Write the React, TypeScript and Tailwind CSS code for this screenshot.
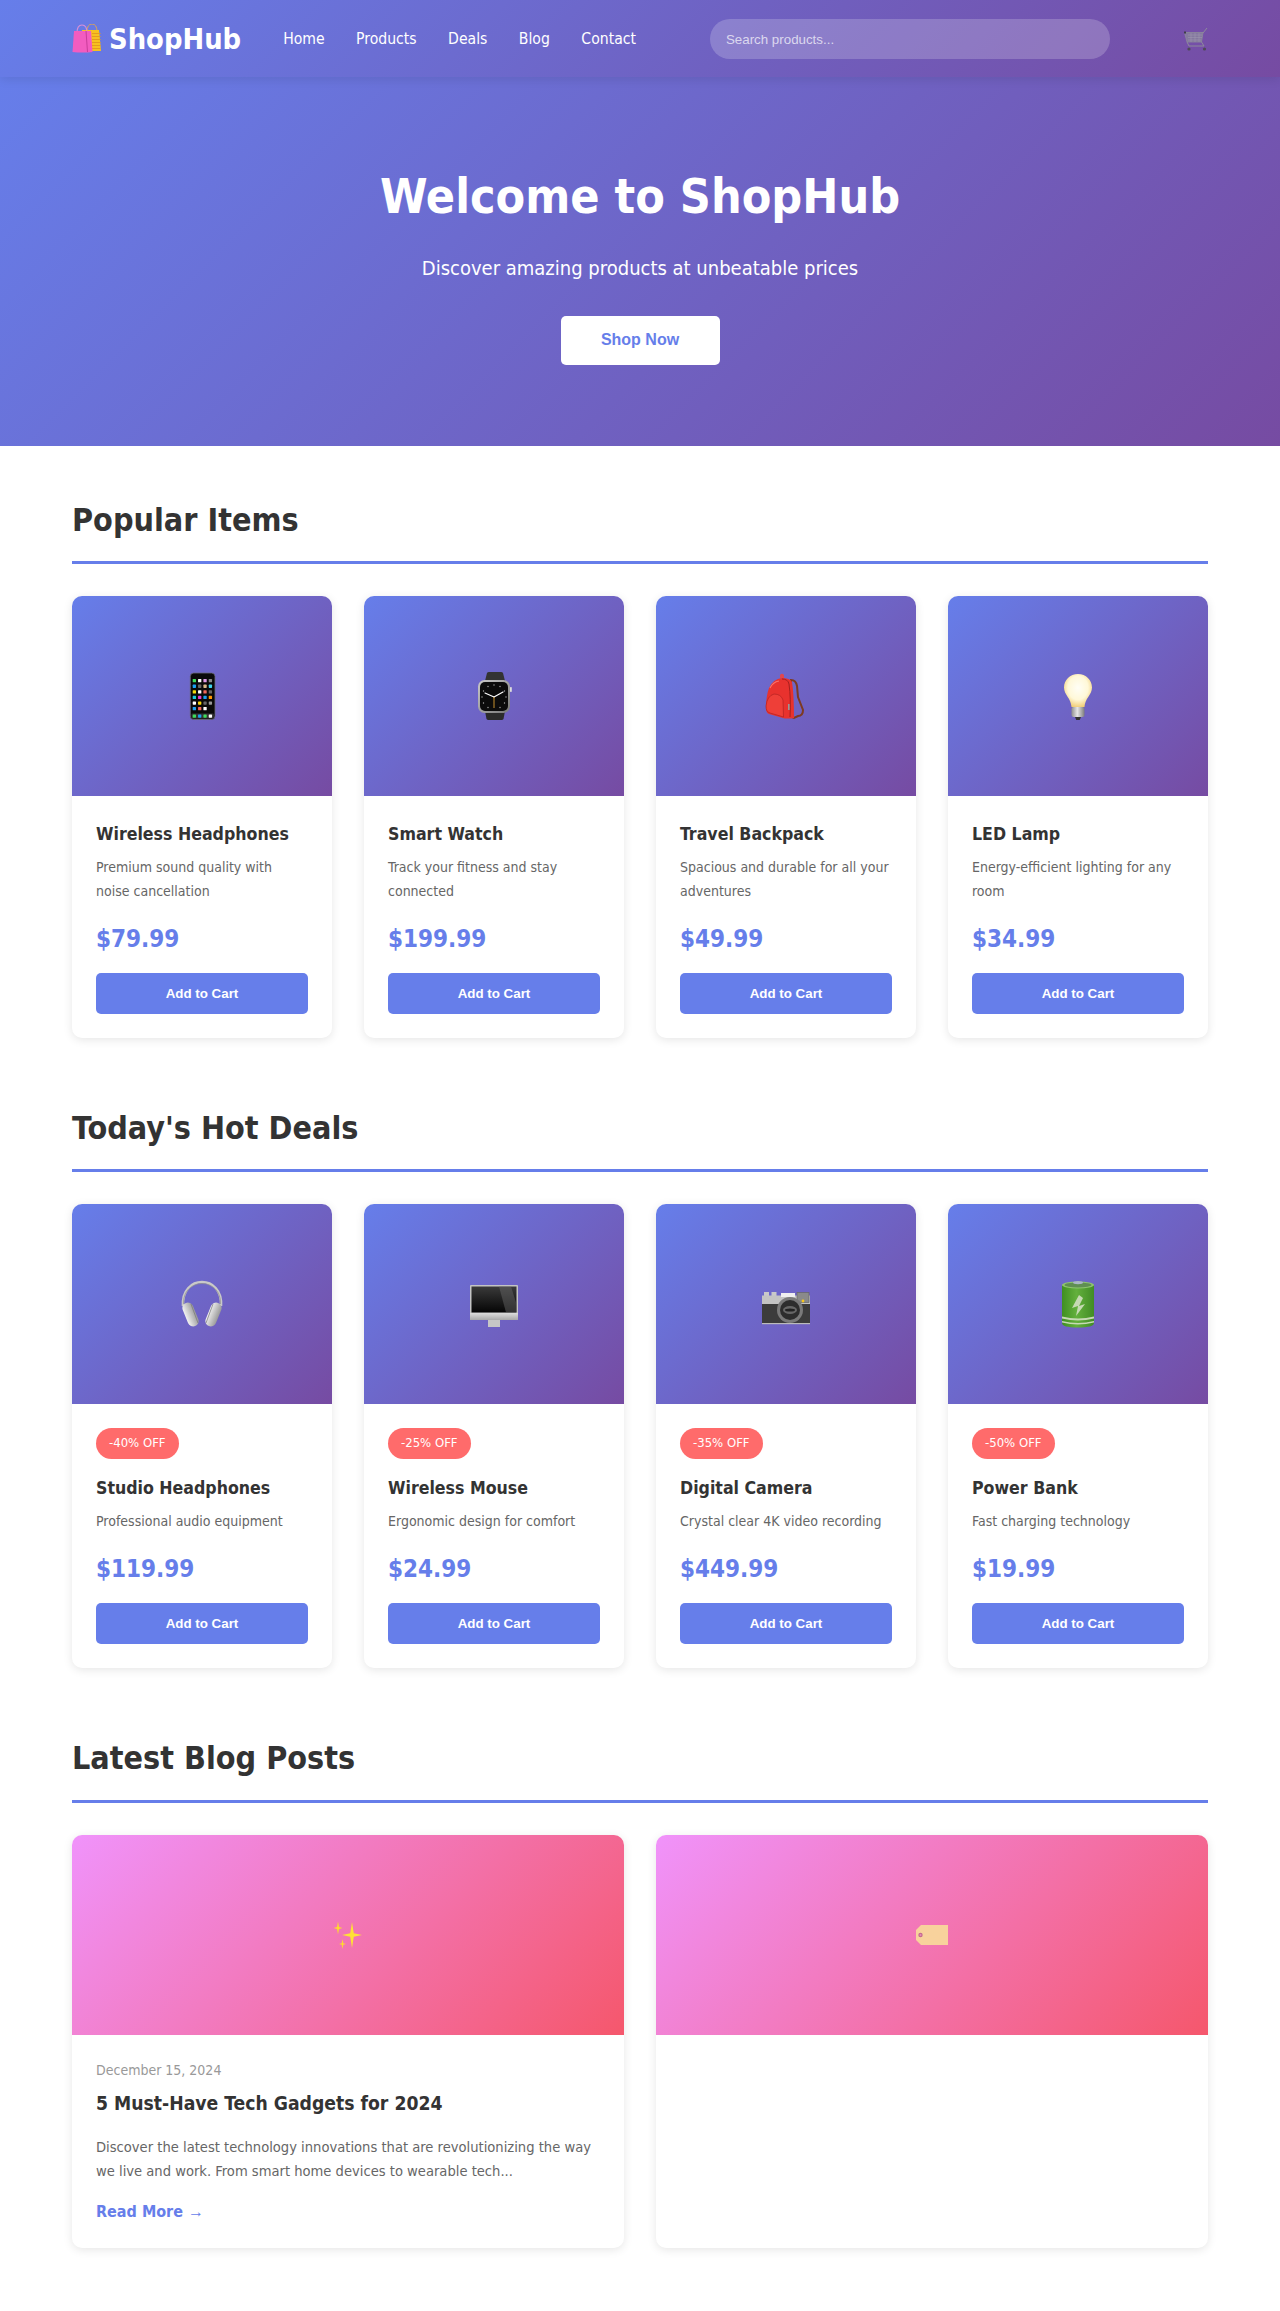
import type { ReactNode } from 'react';

// emoji drawings, all on a 48x48 box unless noted
const phoneDots = [
  ['#3ddc5a', '#fff', '#e09be8', '#8a8a8a'],
  ['#1ba0f2', '#666', '#d9b98a', '#3fd4ee'],
  ['#f5d90a', '#fff', '#f0685c', '#666'],
  ['#19c8dc', '#e83bd0', '#1ba0f2', '#ff9500'],
  ['#fff', '#f5d90a', '#666', '#999'],
  ['#1ba0f2', '#f0685c', '#fff', ''],
];

const Phone = () => (
  <svg width="48" height="48" viewBox="0 0 48 48">
    <rect x="12.3" y="1" width="24.7" height="46.5" rx="3.5" fill="#0a0a0a" stroke="#6b6b78" strokeWidth="0.8" />
    {phoneDots.map((row, r) =>
      row.map((c, i) => c && <rect key={`${r}-${i}`} x={14.7 + i * 5.35} y={7 + r * 5.6} width="3.3" height="3.3" rx="0.6" fill={c} />),
    )}
    <rect x="13.5" y="41.5" width="22.3" height="5" rx="1" fill="#333" />
    {['#3ddc5a', '#1ba0f2', '#3ddc5a', '#fff'].map((c, i) => (
      <rect key={i} x={14.7 + i * 5.35} y="42.4" width="3.3" height="3.3" rx="0.6" fill={c} />
    ))}
  </svg>
);

const Watch = () => (
  <svg width="48" height="48" viewBox="0 0 48 48">
    <defs>
      <linearGradient id="watchCase" x1="0" y1="0" x2="1" y2="1">
        <stop offset="0" stopColor="#c9c9c9" />
        <stop offset="1" stopColor="#777" />
      </linearGradient>
    </defs>
    <path d="M15 9 L17 1 Q17.5 0 19 0 H31 Q32.5 0 33 1 L35 9Z" fill="#333" />
    <path d="M15 39 L16.5 47 Q17 48 18.5 48 H31.5 Q33 48 33.5 47 L35 39Z" fill="#2b2b2b" />
    <rect x="8" y="8" width="32" height="33" rx="6.5" fill="url(#watchCase)" />
    <rect x="40" y="15" width="1.8" height="5" rx="0.8" fill="#ddd" />
    <rect x="10" y="10" width="28" height="29" rx="5" fill="#0b0b0b" />
    {[[24, 13], [30, 14.5], [34.5, 19], [36, 25], [34.5, 31], [30, 35.5], [18, 35.5], [13.5, 31], [12, 25], [13.5, 19], [18, 14.5]].map(([x, y]) => (
      <circle key={`${x}-${y}`} cx={x} cy={y} r="0.7" fill="#aaa" />
    ))}
    <path d="M24 25 L15 21" stroke="#fff" strokeWidth="1.2" strokeLinecap="round" />
    <path d="M24 25 L33 20" stroke="#fff" strokeWidth="1.2" strokeLinecap="round" />
    <path d="M24 25 V36" stroke="#c8922e" strokeWidth="1" />
  </svg>
);

const Backpack = () => (
  <svg width="48" height="48" viewBox="0 0 48 48">
    <path d="M29 8 Q34 8 35 14 L36 25 L41 38 Q41 44 36 44 L32 46 L27 44Z" fill="none" stroke="#7d3a22" strokeWidth="2" />
    <path d="M18 3 Q20 0.5 22 3 L22 6 H18Z" fill="#e0474f" />
    <path d="M4 36 Q4 24 7 16 Q11 7 20 6 Q28 6 30 10 Q32 22 32 46 Q24 47 21 46 L7 42 Q4 41 4 36Z" fill="#e8322e" />
    <path d="M20 7 Q26 7 27 12 Q29 26 28 45" fill="none" stroke="#a51f1e" strokeWidth="1" />
    <path d="M4 34 Q5 24 12 22 Q19 22 21 28 L21.5 45 L8 41 Q4 40 4 34Z" fill="#ee3f38" stroke="#b92523" strokeWidth="0.8" />
    <path d="M8 16 Q11 10 17 9" fill="none" stroke="#f8716a" strokeWidth="1.2" />
    <rect x="26" y="32" width="1.6" height="6" fill="#999" />
  </svg>
);

const Bulb = () => (
  <svg width="48" height="48" viewBox="0 0 48 48">
    <defs>
      <radialGradient id="bulbGlass" cx="0.5" cy="0.42" r="0.6">
        <stop offset="0" stopColor="#fffef6" />
        <stop offset="0.6" stopColor="#fff8d8" />
        <stop offset="1" stopColor="#f0cc74" />
      </radialGradient>
      <linearGradient id="bulbBase" x1="0" y1="0" x2="1" y2="0">
        <stop offset="0" stopColor="#8f8f8f" />
        <stop offset="0.45" stopColor="#e6e6e6" />
        <stop offset="1" stopColor="#7c7c7c" />
      </linearGradient>
    </defs>
    <path d="M24 2 C32 2 38 8 38 15.5 C38 23 31 26 30.5 35 H17.5 C17 26 10 23 10 15.5 C10 8 16 2 24 2Z" fill="url(#bulbGlass)" />
    <rect x="17.5" y="35" width="13" height="10" rx="2" fill="url(#bulbBase)" />
    <path d="M21 45 H27 L25.5 48.5 H22.5Z" fill="#333" />
  </svg>
);

const Headphones = () => (
  <svg width="48" height="48" viewBox="0 0 48 48">
    <defs>
      <linearGradient id="cupGrad" x1="0" y1="0" x2="1" y2="0">
        <stop offset="0" stopColor="#f2f2f2" />
        <stop offset="1" stopColor="#9a9a9a" />
      </linearGradient>
    </defs>
    <path d="M5 26 C4 10 14 2 24 2 C34 2 44 10 43 26" fill="none" stroke="#c9c9c9" strokeWidth="2.6" />
    <path d="M5.5 24 C5 11 14 3.5 24 3.5 C34 3.5 43 11 42.5 24" fill="none" stroke="#8e8e8e" strokeWidth="0.7" />
    <rect x="7" y="22" width="11" height="25" rx="5.5" transform="rotate(-22 12.5 34.5)" fill="url(#cupGrad)" />
    <rect x="30" y="22" width="11" height="25" rx="5.5" transform="rotate(22 35.5 34.5)" fill="url(#cupGrad)" />
    <path d="M13 24 L20 43" stroke="#777" strokeWidth="0.7" />
    <path d="M35 24 L28 43" stroke="#777" strokeWidth="0.7" />
  </svg>
);

const Monitor = () => (
  <svg width="48" height="48" viewBox="0 0 48 48">
    <defs>
      <linearGradient id="screenGrad" x1="0" y1="0" x2="0" y2="1">
        <stop offset="0" stopColor="#3a3a3a" />
        <stop offset="1" stopColor="#050505" />
      </linearGradient>
      <linearGradient id="chinGrad" x1="0" y1="0" x2="0" y2="1">
        <stop offset="0" stopColor="#dcdcdc" />
        <stop offset="1" stopColor="#a8a8a8" />
      </linearGradient>
    </defs>
    <rect x="0" y="5" width="48" height="35" rx="1" fill="#c4c4c4" />
    <rect x="1.5" y="6.5" width="45" height="26" fill="url(#screenGrad)" />
    <path d="M29 6.5 H41 L46.5 24 V32.5 H36Z" fill="#6a6a6a" opacity="0.45" />
    <rect x="0" y="33" width="48" height="7" fill="url(#chinGrad)" />
    <rect x="18" y="40" width="12" height="7" fill="#c6c6c6" />
  </svg>
);

const Camera = () => (
  <svg width="48" height="48" viewBox="0 0 48 48">
    <rect x="2" y="12" width="5" height="4" fill="#c9c9c9" />
    <rect x="9.5" y="12" width="5" height="4" fill="#c9c9c9" />
    <rect x="0" y="15.5" width="48" height="9" fill="#c4c4c4" />
    <rect x="19" y="13" width="14" height="4" fill="#efefef" />
    <rect x="35" y="12.5" width="12" height="10" fill="#8a8a8a" stroke="#666" strokeWidth="0.7" />
    <rect x="0" y="24" width="48" height="19" fill="#3c3c3c" />
    <rect x="0" y="43" width="48" height="1.2" fill="#bbb" />
    <circle cx="28" cy="30" r="13" fill="#7a7a7a" />
    <circle cx="28" cy="30" r="10" fill="#2d2d2d" />
    <ellipse cx="28" cy="30" rx="7" ry="4" fill="#666" />
    <ellipse cx="28" cy="30" rx="5" ry="1.5" fill="#222" />
    <circle cx="41" cy="21" r="1.4" fill="#f7c61b" />
  </svg>
);

const Battery = () => (
  <svg width="48" height="48" viewBox="0 0 48 48">
    <defs>
      <linearGradient id="batteryGrad" x1="0" y1="0" x2="1" y2="0">
        <stop offset="0" stopColor="#3f8f22" />
        <stop offset="0.45" stopColor="#63b03c" />
        <stop offset="1" stopColor="#418c25" />
      </linearGradient>
    </defs>
    <path d="M8 5 V43 Q8 47.5 24 47.5 Q40 47.5 40 43 V5Z" fill="url(#batteryGrad)" />
    <ellipse cx="24" cy="5" rx="16" ry="3.5" fill="#8ec56e" />
    <ellipse cx="24" cy="5" rx="13.5" ry="2.4" fill="#5f8f52" />
    <ellipse cx="24" cy="2.6" rx="5" ry="1.6" fill="#a9b7c4" />
    <path d="M25 15 L18 28 L24 26 L22 36 L31 24 L25 26 L29 18Z" fill="#c6d9b4" />
    <path d="M8 36.5 Q24 40.5 40 36.5 V38.5 Q24 42.5 8 38.5Z" fill="#c6d9b4" />
    <path d="M8 41 Q24 45 40 41 V42.5 Q24 46.5 8 42.5Z" fill="#c6d9b4" />
  </svg>
);

const Sparkles = () => (
  <svg width="32" height="32" viewBox="0 0 32 32">
    <path d="M20 3 L21.8 14.2 L30 16 L21.8 17.8 L20 29 L18.2 17.8 L10 16 L18.2 14.2Z" fill="#ffe135" />
    <path d="M6 2.5 L7 8 L10.5 9 L7 10 L6 15.5 L5 10 L1.5 9 L5 8Z" fill="#ffd92e" />
    <path d="M10.5 20 L11.3 24.2 L14 25 L11.3 25.8 L10.5 30 L9.7 25.8 L7 25 L9.7 24.2Z" fill="#ffd92e" />
  </svg>
);

const Tag = () => (
  <svg width="32" height="32" viewBox="0 0 32 32">
    <path d="M5 6 H32 V26 H5 L0 21 V11Z" fill="#f8d29c" />
    <circle cx="4.5" cy="16" r="2.2" fill="#c46b8f" />
    <circle cx="4.5" cy="16" r="1" fill="#e88ab8" />
  </svg>
);

const Bags = () => (
  <svg width="29" height="29" viewBox="0 0 29 29" className="shrink-0">
    <path d="M15 8 Q15 0 20 0 Q25 0 25 8" fill="none" stroke="#d9a25c" strokeWidth="1" />
    <path d="M10 6 H27 L29 27 H10Z" fill="#f7c11f" />
    {[9, 12, 15, 18, 21, 24].map((y) => (
      <rect key={y} x="20" y={y} width="8.5" height="1" fill="#e59a1f" />
    ))}
    <path d="M5 9 Q5 1 10 1 Q15 1 15 9" fill="none" stroke="#d78fd8" strokeWidth="1.2" />
    <path d="M2 7 H19 L20.5 28 Q11 29 0.5 28Z" fill="#f25cc0" />
    <path d="M14 7 L15.5 28" stroke="#c93c9a" strokeWidth="1" />
  </svg>
);

const Cart = () => (
  <svg width="24" height="24" viewBox="0 0 24 24" className="shrink-0">
    <path d="M0.5 5.5 H19 L17.5 15 H3Z" fill="#84789f" stroke="#8d8a9b" strokeWidth="0.8" />
    <path d="M4 8 H18 M4 10.5 H18 M4 13 H17 M7 6 V15 M11 6 V15 M15 6 V15" stroke="#a09bb0" strokeWidth="0.5" />
    <path d="M19 6 L23 1" stroke="#8d8a9b" strokeWidth="1" />
    <path d="M3 15 L5 19 H20 L17.5 15" fill="none" stroke="#8d8a9b" strokeWidth="1" />
    <circle cx="5" cy="22" r="1.6" fill="#4e4a55" />
    <circle cx="20.5" cy="22" r="1.6" fill="#4e4a55" />
    <rect x="0" y="4.5" width="2" height="2" fill="#3f3c4a" />
  </svg>
);

type Product = { icon: ReactNode; name: string; desc: string; price: string; off?: string };

const popular: Product[] = [
  { icon: <Phone />, name: 'Wireless Headphones', desc: 'Premium sound quality with noise cancellation', price: '$79.99' },
  { icon: <Watch />, name: 'Smart Watch', desc: 'Track your fitness and stay connected', price: '$199.99' },
  { icon: <Backpack />, name: 'Travel Backpack', desc: 'Spacious and durable for all your adventures', price: '$49.99' },
  { icon: <Bulb />, name: 'LED Lamp', desc: 'Energy-efficient lighting for any room', price: '$34.99' },
];

const deals: Product[] = [
  { icon: <Headphones />, off: '-40% OFF', name: 'Studio Headphones', desc: 'Professional audio equipment', price: '$119.99' },
  { icon: <Monitor />, off: '-25% OFF', name: 'Wireless Mouse', desc: 'Ergonomic design for comfort', price: '$24.99' },
  { icon: <Camera />, off: '-35% OFF', name: 'Digital Camera', desc: 'Crystal clear 4K video recording', price: '$449.99' },
  { icon: <Battery />, off: '-50% OFF', name: 'Power Bank', desc: 'Fast charging technology', price: '$19.99' },
];

const navLinks = ['Home', 'Products', 'Deals', 'Blog', 'Contact'];

const gradient = 'bg-[linear-gradient(135deg,#667eea_0%,#764ba2_100%)]';
const pink = 'bg-[linear-gradient(135deg,#f093fb_0%,#f5576c_100%)]';
const cardBox = 'bg-white rounded-[10px] overflow-hidden shadow-[0_2px_10px_rgba(0,0,0,0.1)]';

const SectionTitle = ({ children }: { children: string }) => (
  <h2 className="text-[32px] leading-[1.6] font-bold text-[#333] border-b-[3px] border-[#667eea] pt-px pb-[15px] mb-8">{children}</h2>
);

const ProductCard = ({ item }: { item: Product }) => (
  <div className={cardBox}>
    <div className={`h-[200px] flex items-center justify-center ${gradient}`}>{item.icon}</div>
    <div className="p-6">
      {item.off && (
        <div className="w-fit bg-[#ff6b6b] text-white px-[13px] py-[5px] rounded-[20px] text-[13px] leading-[1.6] mb-[15px]">{item.off}</div>
      )}
      <h3 className="text-[17.6px] leading-[1.6] font-bold text-[#333] mb-2">{item.name}</h3>
      <p className="text-sm leading-[1.7] text-[#666] mb-4">{item.desc}</p>
      <div className="text-2xl leading-[1.6] font-bold text-[#667eea] mb-[15px]">{item.price}</div>
      <button className="block w-full h-[41px] bg-[#667eea] text-white rounded-[5px] text-[13.33px] font-bold font-['Liberation_Sans',sans-serif]">Add to Cart</button>
    </div>
  </div>
);

export default function App() {
  return (
    <div className="bg-white text-[#333] leading-[1.6] font-['DejaVu_Sans_Condensed','DejaVu_Sans',sans-serif]">
      <header className={`sticky top-0 z-10 h-[77px] flex items-center px-[72px] shadow-[0_2px_10px_rgba(0,0,0,0.1)] ${gradient}`}>
        <div className="flex items-center gap-2 text-[28.8px] font-bold text-white">
          <Bags />
          <span className="pt-[2px]">ShopHub</span>
        </div>
        <nav className="flex gap-[31.5px] ml-[42px] pt-px">
          {navLinks.map((l) => (
            <a key={l} className="text-white text-[15.6px]">{l}</a>
          ))}
        </nav>
        <input
          placeholder="Search products..."
          className="ml-[74px] w-[400px] h-10 mt-px rounded-[25px] bg-white/20 px-4 text-[13.33px] text-white placeholder:text-white/70 font-['Liberation_Sans',sans-serif] outline-none"
        />
        <div className="ml-auto"><Cart /></div>
      </header>

      <section className={`pt-[81px] pb-[81px] flex flex-col items-center text-white ${gradient}`}>
        <h1 className="text-5xl leading-[1.6] font-bold mb-[17px]">Welcome to ShopHub</h1>
        <p className="text-xl leading-[1.6] mb-8">Discover amazing products at unbeatable prices</p>
        <button className="bg-white text-[#667eea] w-[159px] h-[49px] rounded-[5px] font-bold text-base font-['Liberation_Sans',sans-serif]">Shop Now</button>
      </section>

      <main className="px-[72px] pt-12 pb-16">
        <SectionTitle>Popular Items</SectionTitle>
        <div className="grid grid-cols-4 gap-8 mb-16">
          {popular.map((p) => <ProductCard key={p.name} item={p} />)}
        </div>

        <SectionTitle>Today's Hot Deals</SectionTitle>
        <div className="grid grid-cols-4 gap-8 mb-16">
          {deals.map((p) => <ProductCard key={p.name} item={p} />)}
        </div>

        <SectionTitle>Latest Blog Posts</SectionTitle>
        <div className="grid grid-cols-2 gap-8">
          <div className={cardBox}>
            <div className={`h-[200px] flex items-center justify-center ${pink}`}><Sparkles /></div>
            <div className="p-6">
              <div className="text-sm leading-[1.6] text-[#999] mb-2">December 15, 2024</div>
              <h3 className="text-[19.2px] leading-[1.6] font-bold text-[#333] mb-[15px]">5 Must-Have Tech Gadgets for 2024</h3>
              <p className="text-[14.6px] leading-6 text-[#666] mb-4">Discover the latest technology innovations that are revolutionizing the way we live and work. From smart home devices to wearable tech...</p>
              <a className="block font-bold text-[#667eea]">Read More <span className="font-normal font-['Liberation_Sans',sans-serif]">→</span></a>
            </div>
          </div>
          <div className={cardBox}>
            <div className={`h-[200px] flex items-center justify-center ${pink}`}><Tag /></div>
          </div>
        </div>
      </main>
    </div>
  );
}
